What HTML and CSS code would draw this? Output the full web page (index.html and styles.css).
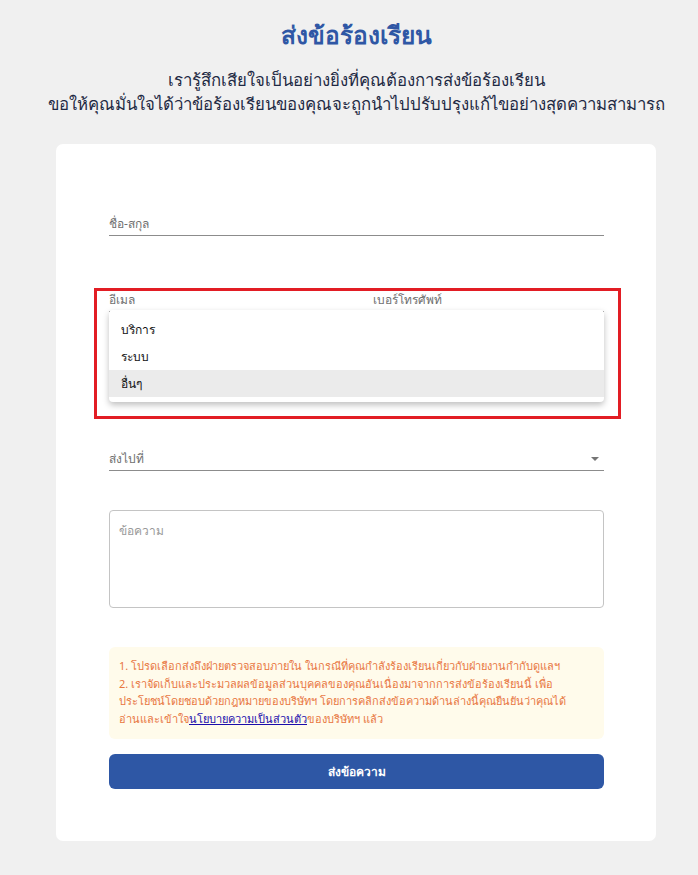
FILE: index.html
```html
<!DOCTYPE html>
<html lang="th">

<head>
    <meta charset="UTF-8">
    <meta name="viewport" content="width=device-width, initial-scale=1.0">
    <title>ส่งข้อร้องเรียน</title>
    <link rel="stylesheet" href="styles.css">
</head>

<body>
    <h1 class="title">ส่งข้อร้องเรียน</h1>
    <p class="subtitle">เรารู้สึกเสียใจเป็นอย่างยิ่งที่คุณต้องการส่งข้อร้องเรียน<br>ขอให้คุณมั่นใจได้ว่าข้อร้องเรียนของคุณจะถูกนำไปปรับปรุงแก้ไขอย่างสุดความสามารถ</p>

    <div class="card">
        <form class="complain-form" action="" method="post">
            <div class="field field-name">
                <input type="text" placeholder="ชื่อ-สกุล">
            </div>

            <div class="row">
                <div class="field">
                    <input type="text" placeholder="อีเมล">
                </div>
                <div class="field">
                    <input type="text" placeholder="เบอร์โทรศัพท์">
                </div>
            </div>

            <div class="field field-select">
                <span class="select-text">ส่งไปที่</span>
                <span class="caret"></span>
            </div>

            <textarea class="message" placeholder="ข้อความ"></textarea>

            <div class="notice">
                1. โปรดเลือกส่งถึงฝ่ายตรวจสอบภายใน ในกรณีที่คุณกำลังร้องเรียนเกี่ยวกับฝ่ายงานกำกับดูแลฯ<br>
                2. เราจัดเก็บและประมวลผลข้อมูลส่วนบุคคลของคุณอันเนื่องมาจากการส่งข้อร้องเรียนนี้ เพื่อประโยชน์โดยชอบด้วยกฎหมายของบริษัทฯ โดยการคลิกส่งข้อความด้านล่างนี้คุณยืนยันว่าคุณได้ อ่านและเข้าใจ<a href="#">นโยบายความเป็นส่วนตัว</a>ของบริษัทฯ แล้ว
            </div>

            <button class="btn-send" type="submit">ส่งข้อความ</button>
        </form>

        <!-- open dropdown of "ส่งไปที่" -->
        <ul class="menu">
            <li>บริการ</li>
            <li>ระบบ</li>
            <li class="active">อื่นๆ</li>
        </ul>
        <div class="highlight"></div>
    </div>
</body>

</html>
```
FILE: styles.css
```css
body {
    font-family: Tahoma, "Noto Sans", "Liberation Sans", sans-serif;
    margin: 0;
    padding: 0 0 34px 14px;
    background-color: #f0f0f0;
    color: #222;
}

.title {
    margin: 0;
    padding-top: 20px;
    text-align: center;
    font-size: 24.5px;
    line-height: 30px;
    color: #2f57a5;
}

.subtitle {
    margin: 18px 0 0;
    text-align: center;
    font-size: 16.8px;
    line-height: 24px;
    color: #1f2a44;
    white-space: nowrap;
}

.card {
    position: relative;
    width: 600px;
    margin: 28px auto 0;
    background-color: #fff;
    border-radius: 7px;
    padding: 68px 52px 52px 53px;
    box-sizing: border-box;
}

.complain-form {
    display: flex;
    flex-direction: column;
}

.field {
    display: flex;
    align-items: center;
    height: 23px;
    border-bottom: 1px solid #8c8c8c;
}

.field input {
    width: 100%;
    border: none;
    outline: none;
    padding: 0;
    font-family: inherit;
    font-size: 12px;
    background: transparent;
}

.field input::placeholder {
    color: #6f6f6f;
}

.row {
    display: grid;
    grid-template-columns: 1fr 1fr;
    gap: 32px;
    margin-top: 52px;
}

.field-select {
    justify-content: space-between;
    margin-top: 135px;
}

.select-text {
    font-size: 12px;
    color: #6f6f6f;
}

.caret {
    width: 0;
    height: 0;
    margin-right: 5px;
    border-left: 4px solid transparent;
    border-right: 4px solid transparent;
    border-top: 4px solid #757575;
}

.message {
    margin-top: 39px;
    height: 98px;
    border: 1px solid #c4c4c4;
    border-radius: 4px;
    padding: 10px 9px;
    box-sizing: border-box;
    resize: none;
    font-family: inherit;
    font-size: 12px;
}

.message::placeholder {
    color: #9a9a9a;
}

.notice {
    margin-top: 39px;
    padding: 10px 28px 12px 10px;
    background-color: #fffbeb;
    border-radius: 6px;
    font-size: 11px;
    line-height: 17.5px;
    color: #e8763f;
    box-sizing: border-box;
    height: 92px;
}

.notice a {
    color: #1a0dab;
}

.btn-send {
    margin-top: 15px;
    height: 35px;
    border: none;
    border-radius: 6px;
    background-color: #2e57a5;
    color: #fff;
    font-family: inherit;
    font-size: 12px;
    font-weight: bold;
    cursor: pointer;
}

.menu {
    position: absolute;
    top: 166px;
    left: 53px;
    right: 52px;
    margin: 0;
    padding: 6px 0 5px;
    list-style: none;
    background-color: #fff;
    border-radius: 4px;
    box-shadow: 0 3px 6px rgba(0, 0, 0, 0.25);
}

.menu li {
    height: 27px;
    line-height: 27px;
    padding-left: 12px;
    font-size: 12px;
    color: #111;
}

.menu li.active {
    background-color: #ebebeb;
}

.highlight {
    position: absolute;
    top: 144px;
    left: 38px;
    width: 521px;
    height: 125px;
    border: 3px solid #e21d24;
}
```
